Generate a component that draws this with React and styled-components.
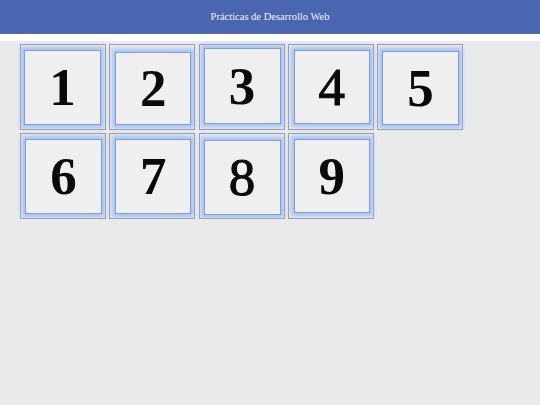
import React from "react";
import styled, { createGlobalStyle } from "styled-components";

const GlobalStyle = createGlobalStyle`
  html, body {
    margin: 0;
    padding: 0;
    background: #e9eaec;
    font-family: "Liberation Serif", "Times New Roman", serif;
  }
`;

const Header = styled.header`
  height: 33px;
  background: #4a66b0;
  border-bottom: 1px solid #5b6e9e;
  display: flex;
  align-items: center;
  justify-content: center;
  color: #f2f4fa;
  font-size: 10.5px;
`;

const Strip = styled.div`
  height: 7px;
  background: #ffffff;
`;

const Board = styled.main`
  display: flex;
  flex-wrap: wrap;
  width: 450px;
  column-gap: 3.25px;
  row-gap: 3px;
  padding: 3px 0 0 20px;
`;

const Tile = styled.div`
  box-sizing: border-box;
  width: 86px;
  height: 86px;
  border: 1px solid #9c9ea6;
  background: #e8eaef;
  padding: ${(p) => `${p.$t}px 0 0 ${p.$l}px`};
`;

const Face = styled.div`
  box-sizing: border-box;
  width: ${(p) => p.$w}px;
  height: ${(p) => p.$h}px;
  background: #efefef;
  border: 1px solid #7e9fdc;
  box-shadow: 0 0 4px 3px rgba(150, 182, 242, 0.8);
  display: flex;
  align-items: center;
  justify-content: center;
  font-size: 53px;
  font-weight: ${(p) => (p.$bold ? 700 : 400)};
  -webkit-text-stroke: ${(p) => (p.$bold ? "0" : "1px #0a0a0a")};
  color: #0a0a0a;
  line-height: 1;
`;

const tiles = [
  { n: 1, l: 3, t: 5, w: 77, h: 75, bold: true },
  { n: 2, l: 5, t: 7, w: 76, h: 73, bold: true },
  { n: 3, l: 4, t: 3, w: 77, h: 76, bold: true },
  { n: 4, l: 5, t: 5, w: 76, h: 74, bold: false },
  { n: 5, l: 4, t: 6, w: 77, h: 74, bold: true },
  { n: 6, l: 4, t: 5, w: 77, h: 75, bold: true },
  { n: 7, l: 5, t: 5, w: 76, h: 75, bold: true },
  { n: 8, l: 4, t: 6, w: 77, h: 75, bold: false },
  { n: 9, l: 5, t: 5, w: 76, h: 74, bold: true },
];

export default function App() {
  return (
    <>
      <GlobalStyle />
      <Header>Prácticas de Desarrollo Web</Header>
      <Strip />
      <Board>
        {tiles.map((t) => (
          <Tile key={t.n} $l={t.l} $t={t.t}>
            <Face $w={t.w} $h={t.h} $bold={t.bold}>
              {t.n}
            </Face>
          </Tile>
        ))}
      </Board>
    </>
  );
}
